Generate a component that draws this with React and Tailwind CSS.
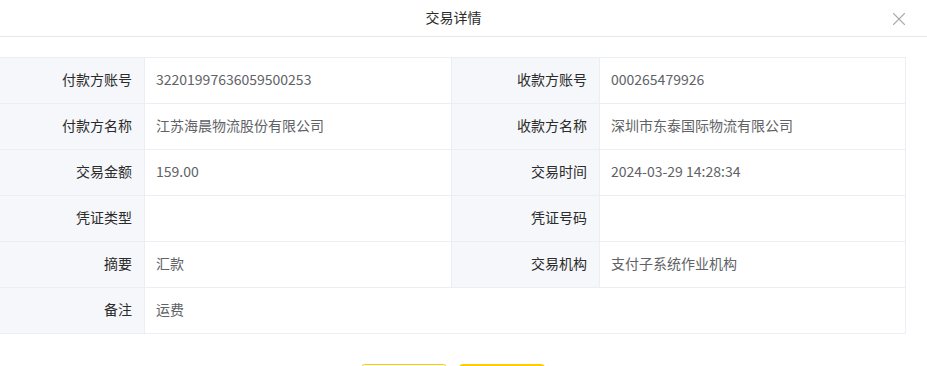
import { X } from 'lucide-react';

const rows = [
  [['付款方账号', '32201997636059500253'], ['收款方账号', '000265479926']],
  [['付款方名称', '江苏海晨物流股份有限公司'], ['收款方名称', '深圳市东泰国际物流有限公司']],
  [['交易金额', '159.00'], ['交易时间', '2024-03-29 14:28:34']],
  [['凭证类型', ''], ['凭证号码', '']],
  [['摘要', '汇款'], ['交易机构', '支付子系统作业机构']],
];

function Label({ children }) {
  return (
    <div className="h-[46px] flex items-center justify-end pr-3 pb-[3px] bg-[#f5f7fa] border-r border-b border-[#ebeef5] text-[#2b2b2b]">
      {children}
    </div>
  );
}

function Value({ children, wide }) {
  return (
    <div
      className={`h-[46px] flex items-center pl-[11px] pb-[3px] border-r border-b border-[#ebeef5] text-[#606266] ${
        wide ? 'col-span-3' : ''
      }`}
    >
      {children}
    </div>
  );
}

export default function App() {
  return (
    <div
      className="w-[927px] h-[366px] overflow-hidden bg-white text-sm"
      style={{ fontFamily: '"Noto Sans CJK SC", "Noto Sans", sans-serif' }}
    >
      {/* Header */}
      <div className="relative h-[37px] border-b border-[#e8e8e8] flex items-center justify-center pr-5">
        <span className="text-[#2b2b2b] pb-[2px]">交易详情</span>
        <X className="absolute right-[17px] top-[8px] w-[22px] h-[22px] text-[#aaa]" strokeWidth={1.2} />
      </div>

      {/* Detail table */}
      <div className="mt-5 ml-[-3px] w-[909px] grid grid-cols-[147px_307px_148px_306px] border-t border-l border-[#ebeef5]">
        {rows.map((row, i) =>
          row.map(([label, value], j) => [
            <Label key={`l${i}${j}`}>{label}</Label>,
            <Value key={`v${i}${j}`}>{value}</Value>,
          ])
        )}
        <Label>备注</Label>
        <Value wide>运费</Value>
      </div>

      {/* Buttons (only the top edge is visible) */}
      <div className="mt-[30px] flex gap-3 pl-[361px]">
        <button className="w-[86px] h-8 rounded-[4px] border border-[#ffcc00] bg-white" />
        <button className="w-[86px] h-8 rounded-[4px] bg-[#ffcc00]" />
      </div>
    </div>
  );
}
